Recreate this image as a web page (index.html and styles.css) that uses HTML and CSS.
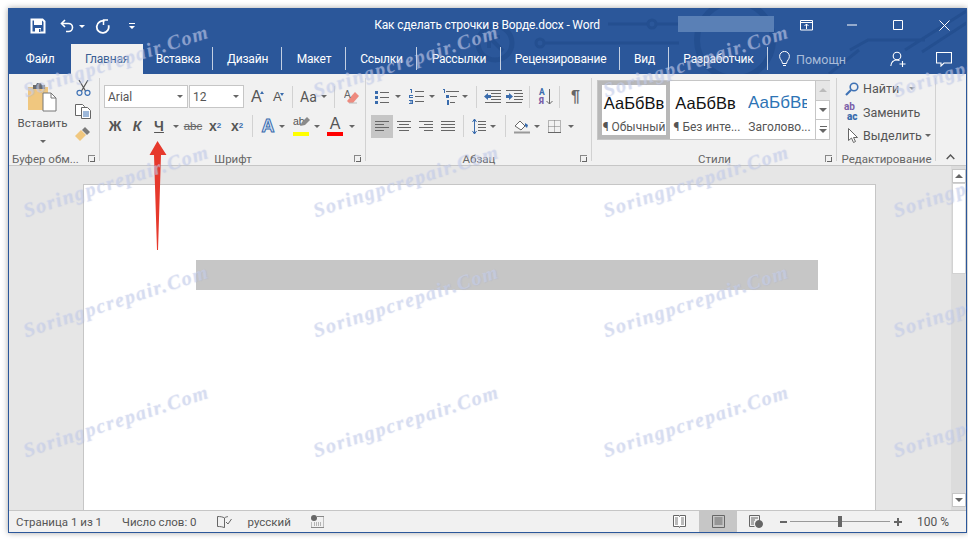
FILE: index.html
```html
<!DOCTYPE html>
<html lang="ru">
<head>
<meta charset="utf-8">
<title>Как сделать строчки в Ворде.docx - Word</title>
<link rel="stylesheet" href="styles.css">
</head>
<body>
<div class="window">
  <header class="head">
    <svg class="circuit" width="957" height="66" viewBox="0 0 957 66" fill="none" stroke="#244f90" stroke-width="3">
      <circle cx="486" cy="35" r="17" stroke-width="5"/>
      <path d="M480 29l14 14M480 29v11M480 29h11" stroke-width="4"/>
      <circle cx="531" cy="35" r="4"/>
      <path d="M535 35H670"/>
      <path d="M599 16H639"/>
      <circle cx="643" cy="16" r="4"/>
      <path d="M647 16H700"/>
      <circle cx="726" cy="32" r="38" stroke-width="6"/>
      <path d="M841 42L859 32H916M896 42L959 2M913 44L959 14M820 66l30-24"/>
    </svg>
    <div class="titlebar">
      <div class="qat">
        <svg class="qsave" width="16" height="16" viewBox="0 0 16 16"><path d="M1.500 1.500h11l2 2v11h-13z" fill="none" stroke="#fff" stroke-width="2"/><path d="M4 2h8v5H4zM5 10h6v5H5z" fill="#fff"/><path d="M9 11h1.500v3H9z" fill="#2b579a"/></svg>
        <svg class="qundo" width="14" height="14" viewBox="0 0 14 14" fill="none" stroke="#fff" stroke-width="1.600"><path d="M5 1L1.500 4.500 5 8"/><path d="M2 4.500h6.500a4 4 0 0 1 0 8H6"/></svg>
        <span class="caret white qdd"></span>
        <svg class="qredo" width="15" height="15" viewBox="0 0 15 15" fill="none" stroke="#fff" stroke-width="1.800"><path d="M9.500 2.200a6 6 0 1 0 4 4"/><path d="M13 1H8.500v5" stroke-width="1.500"/></svg>
        <svg class="qmore" width="8" height="8" viewBox="0 0 8 8"><path d="M1 1h6v1H1z M1 4h6L4 7z" fill="#fff"/></svg>
      </div>
      <div class="doctitle">Как сделать строчки в Ворде.docx - Word</div>
      <div class="controls">
        <span class="blurbox"></span>
        <span class="ctl"><svg width="13" height="11" viewBox="0 0 13 11" fill="none" stroke="#fff"><path d="M.5 .5h12v9.500H.5zM.5 2.500h12"/><path d="M6.500 9V4M4.500 6l2-2 2 2"/></svg></span>
        <span class="ctl"><svg width="10" height="10" viewBox="0 0 10 10"><path d="M0 5h10" stroke="#fff"/></svg></span>
        <span class="ctl"><svg width="10" height="10" viewBox="0 0 10 10"><path d="M.5 .5h9v9h-9z" fill="none" stroke="#fff"/></svg></span>
        <span class="ctl"><svg width="11" height="11" viewBox="0 0 11 11"><path d="M.5 .5l10 10M10.500 .5l-10 10" stroke="#fff"/></svg></span>
      </div>
    </div>
    <nav class="tabs">
      <span class="tab file">Файл</span>
      <span class="tab active">Главная</span>
      <span class="tab sep">Вставка</span>
      <span class="tab sep">Дизайн</span>
      <span class="tab sep">Макет</span>
      <span class="tab sep">Ссылки</span>
      <span class="tab sep">Рассылки</span>
      <span class="tab sep">Рецензирование</span>
      <span class="tab sep">Вид</span>
      <span class="tab sep">Разработчик</span>
      <span class="help">
        <svg width="11" height="16" viewBox="0 0 11 16" fill="none" stroke="#fff"><path d="M3.500 12.500C3 9 .6 8.500 .6 5.300a4.900 4.900 0 0 1 9.800 0c0 3.200-2.400 3.700-2.900 7.200zM4 14.500h3"/></svg>
        <span class="helptext">Помощн</span>
      </span>
      <span class="tabicons">
        <svg width="16" height="16" viewBox="0 0 16 16" fill="none" stroke="#fff" stroke-width="1.100"><circle cx="7" cy="5" r="3.800"/><path d="M.8 15c.4-3.500 2.500-6 6.200-6 1 0 1.800.2 2.500.5M12.500 10v6M9.500 13h6"/></svg>
        <svg width="16" height="15" viewBox="0 0 16 15" fill="none" stroke="#fff" stroke-width="1.100"><path d="M.5 .5h15v10.500H8l-3 3v-3H.5z"/></svg>
      </span>
    </nav>
  </header>

  <section class="ribbon">
    <div class="group g-clip">
      <div class="g-body clipbody">
        <div class="paste">
          <svg width="29" height="30" viewBox="0 0 29 30"><path d="M0 5h20v23H0z" fill="#f0c77f"/><path d="M5 3h3l1-2h4l1 2h3v4H5z" fill="#6a6a6a"/><path d="M15 11h8l5 5v13H15z" fill="#fff" stroke="#777"/><path d="M23 11v5h5" fill="none" stroke="#777"/></svg>
          <span class="pastelabel">Вставить</span>
          <span class="caret"></span>
        </div>
        <div class="clipicons">
          <svg width="15" height="16" viewBox="0 0 15 16" fill="none" stroke="#555" stroke-width="1.200"><path d="M3 0l6.500 11M12 0L5.500 11"/><circle cx="3.500" cy="12.800" r="2.500" stroke="#3f72b5"/><circle cx="11.500" cy="12.800" r="2.500" stroke="#3f72b5"/></svg>
          <svg width="16" height="15" viewBox="0 0 16 15" fill="#fff" stroke="#666"><path d="M.5 .5h7l2 2v9h-9z"/><path d="M6.500 3.500h6l3 3v8h-9z"/><path d="M8 8h6M8 10h6M8 12h6" stroke="#3f72b5"/></svg>
          <svg width="16" height="15" viewBox="0 0 16 15"><path d="M0 9l6-6 5 5-6 6z" fill="#f0c77f"/><path d="M7 3l3-3 5 5-3 3z" fill="#7a7a7a"/></svg>
        </div>
      </div>
      <div class="g-label"><span class="lbl-l">Буфер обм...</span><i class="launch"></i></div>
    </div>

    <div class="group g-font">
      <div class="g-body">
        <div class="row r1">
          <span class="combo c-font">Arial<span class="caret"></span></span>
          <span class="combo c-size">12<span class="caret"></span></span>
          <span class="growA big">A<i class="tri up"></i></span>
          <span class="growA small">A<i class="tri down"></i></span>
          <i class="vsep vs-a"></i>
          <span class="case">Aa<span class="caret"></span></span>
          <i class="vsep vs-b"></i>
          <svg class="erase" width="16" height="15" viewBox="0 0 16 15"><path d="M3 12L11 3l4 4-6 7H5z" fill="#ee8a7e"/><text x="0" y="9" class="eraseA">A</text><path d="M5 14h8" stroke="#bbb"/></svg>
        </div>
        <div class="row r2">
          <span class="fb fbold">Ж</span>
          <span class="fb fital">К</span>
          <span class="fb funder">Ч</span>
          <span class="dd"><span class="caret"></span></span>
          <span class="fb fstrike">abc</span>
          <span class="fb fsub">x<sub>2</sub></span>
          <span class="fb fsub sup">x<sup>2</sup></span>
          <i class="vsep v2"></i>
          <span class="fb feffect">A</span>
          <span class="dd ddn"><span class="caret"></span></span>
          <span class="fb fhl"><span class="hltext">ab</span><svg class="pen" width="10" height="10" viewBox="0 0 10 10"><path d="M0 9l2-4 5-5 3 3-5 5z" fill="#8a8a8a"/></svg><i class="bar yellow"></i></span>
          <span class="dd"><span class="caret"></span></span>
          <span class="fb fcolor">A<i class="bar red"></i></span>
          <span class="dd"><span class="caret"></span></span>
        </div>
      </div>
      <div class="g-label"><span>Шрифт</span><i class="launch"></i></div>
    </div>

    <div class="group g-para">
      <div class="g-body">
        <div class="row r1 pr1">
          <span class="pi w-bul"><svg width="14" height="14" viewBox="0 0 14 14"><path d="M5 2.500h9M5 7.500h9M5 12.500h9" stroke="#666"/><path d="M0 1h3v3H0zM0 6h3v3H0zM0 11h3v3H0z" fill="#3a6cad"/></svg></span>
          <span class="dd d18"><span class="caret"></span></span>
          <span class="pi w-num"><svg width="15" height="15" viewBox="0 0 15 15"><path d="M6 2.500h9M6 7.500h9M6 12.500h9" stroke="#666"/><path d="M1 0h2v4H2V1H1zM0 6h4v1H1v1h3v1H0zM0 11h4v4H0v-1h3v-.5H1v-1h2V12H0z" fill="#3a6cad"/></svg></span>
          <span class="dd d16"><span class="caret"></span></span>
          <span class="pi w-multi"><svg width="17" height="16" viewBox="0 0 17 16"><path d="M4 2.500h13M8 7.500h7M8 13.500h5" stroke="#666"/><path d="M1 0h2v4H2V1H1zM4 6h3v3H4zM5 11h2v5H5z" fill="#3a6cad"/></svg></span>
          <span class="dd d11"><span class="caret"></span></span>
          <i class="vsep vs-c"></i>
          <span class="pi w-ind"><svg width="17" height="13" viewBox="0 0 17 13"><path d="M1 .5h16M7 3.500h10M7 6.500h10M7 9.500h10M1 12.500h16" stroke="#666"/><path d="M0 6.500L4 3v2h3v3H4v2z" fill="#3a6cad"/></svg></span>
          <span class="pi w-ind"><svg width="17" height="13" viewBox="0 0 17 13"><path d="M0 .5h16M8 3.500h9M8 6.500h9M8 9.500h9M0 12.500h16" stroke="#666"/><path d="M7 6.500L3 3v2H0v3h3v2z" fill="#3a6cad"/></svg></span>
          <i class="vsep vs-d"></i>
          <span class="pi w-sort"><span class="sortA"><span>А</span><b>Я</b></span><svg width="7" height="16" viewBox="0 0 7 16"><path d="M3.500 0v15M.5 12l3 3 3-3" fill="none" stroke="#666"/></svg></span>
          <i class="vsep vs-e"></i>
          <span class="pilcrow">¶</span>
        </div>
        <div class="row r2 pr2">
          <span class="al active-al"><svg width="14" height="11" viewBox="0 0 14 11"><path d="M0 .5h14M0 3.500h9M0 6.500h14M0 9.500h9" stroke="#666"/></svg></span>
          <span class="al"><svg width="14" height="11" viewBox="0 0 14 11"><path d="M0 .5h14M2 3.500h10M0 6.500h14M2 9.500h10" stroke="#666"/></svg></span>
          <span class="al"><svg width="14" height="11" viewBox="0 0 14 11"><path d="M0 .5h14M5 3.500h9M0 6.500h14M5 9.500h9" stroke="#666"/></svg></span>
          <span class="al"><svg width="14" height="11" viewBox="0 0 14 11"><path d="M0 .5h14M0 3.500h14M0 6.500h14M0 9.500h14" stroke="#666"/></svg></span>
          <i class="vsep v3"></i>
          <span class="pi w-ls"><svg width="14" height="15" viewBox="0 0 14 15"><path d="M6 2.500h8M6 5.500h8M6 8.500h8M6 11.500h8" stroke="#666"/><path d="M2.500 0v15M.5 3l2-3 2 3M.5 12l2 3 2-3" fill="none" stroke="#3a6cad"/></svg></span>
          <span class="dd d14"><span class="caret"></span></span>
          <i class="vsep v4"></i>
          <span class="pi w-shade"><svg width="16" height="15" viewBox="0 0 16 15"><path d="M1 7l5-5 5 5-4 4z" fill="#fff" stroke="#666"/><path d="M11 4l3 2-1 3-2-2z" fill="#3a6cad"/><path d="M0 13.500h16" stroke="#999" stroke-width="2"/></svg></span>
          <span class="dd d14"><span class="caret"></span></span>
          <span class="pi w-bord"><svg width="13" height="13" viewBox="0 0 13 13"><path d="M.5 .5h12v12H.5zM.5 6.500h12M6.500 .5v12" fill="none" stroke="#777" stroke-dasharray="1 1"/><path d="M0 12.500h13" stroke="#666"/></svg></span>
          <span class="dd d20"><span class="caret"></span></span>
        </div>
      </div>
      <div class="g-label"><span>Абзац</span><i class="launch"></i></div>
    </div>

    <div class="group g-styles">
      <div class="g-body">
        <div class="gallery">
          <div class="style selected"><span class="sample">АаБбВв</span><span class="stylename">¶ Обычный</span></div>
          <div class="style"><span class="sample">АаБбВв</span><span class="stylename">¶ Без инте...</span></div>
          <div class="style third"><span class="sample blue">АаБбВв</span><span class="stylename">Заголово...</span></div>
          <div class="gscroll">
            <span class="gb off"><span class="caret up"></span></span>
            <span class="gb"><span class="caret"></span></span>
            <span class="gb more"><i></i><span class="caret"></span></span>
          </div>
        </div>
      </div>
      <div class="g-label"><span>Стили</span><i class="launch"></i></div>
    </div>

    <div class="group g-edit">
      <div class="g-body editbody">
        <div class="edit"><svg class="find" width="14" height="14" viewBox="0 0 14 14" fill="none"><circle cx="9" cy="5" r="3.800" stroke="#3f72b5" stroke-width="1.600"/><path d="M6 8l-5 5" stroke="#3f72b5" stroke-width="2.200"/></svg><span>Найти</span><span class="caret c-find"></span></div>
        <div class="edit"><span class="abac"><span>ab</span><b>ac</b></span><span>Заменить</span></div>
        <div class="edit"><svg class="cursor" width="11" height="15" viewBox="0 0 11 15"><path d="M.5 .5v12l3-2.500 2 4.500 2-1-2-4h4z" fill="#fff" stroke="#666"/></svg><span>Выделить</span><span class="caret"></span></div>
      </div>
      <div class="g-label"><span>Редактирование</span></div>
    </div>

    <div class="collapse"><svg width="9" height="6" viewBox="0 0 9 6"><path d="M.7 5l3.800-4 3.800 4" fill="none" stroke="#555" stroke-width="1.400"/></svg></div>
  </section>

  <main class="docarea">
    <div class="pagewrap">
      <div class="page"><div class="graybar"></div></div>
    </div>
    <aside class="vscroll">
      <span class="sbtn"><span class="caret up"></span></span>
      <span class="thumb"></span>
      <span class="strack"></span>
      <span class="sbtn"><span class="caret"></span></span>
    </aside>
  </main>

  <footer class="status">
    <span class="st s1">Страница 1 из 1</span>
    <span class="st s2">Число слов: 0</span>
    <svg class="s3" width="15" height="12" viewBox="0 0 15 12" fill="none" stroke="#666"><path d="M7.500 2C6 .8 3 .5 .5 .5v10c3 0 5 .3 7 1.200zM7.500 2C8.500 1 10 .7 11 .6"/><path d="M9 6l2 2 3.500-5"/></svg>
    <span class="st s4">русский</span>
    <svg class="s5" width="13" height="13" viewBox="0 0 13 13"><circle cx="3" cy="3" r="3" fill="#666"/><path d="M6 1.500h7v11H0V7" fill="none" stroke="#888"/><path d="M3 8h8M3 10h8" stroke="#777" stroke-dasharray="1 1"/></svg>
    <span class="status-right">
      <svg class="vw" width="13" height="13" viewBox="0 0 13 13" fill="#fff" stroke="#666"><path d="M.5 .5h5.500l.5 1 .5-1h5.500v11H7l-.5 1-.5-1H.5z"/><path d="M2 3h3M2 5h3M2 7h3M2 9h3M8 3h3M8 5h3M8 7h3M8 9h3" stroke="#777"/></svg>
      <span class="viewactive"><svg width="13" height="13" viewBox="0 0 13 13" fill="none" stroke="#666"><path d="M.5 .5h12v12H.5zM2.500 3h8M2.500 5h8M2.500 7h8M2.500 9h8"/></svg></span>
      <svg class="vw2" width="14" height="13" viewBox="0 0 14 13" fill="none" stroke="#666"><path d="M.5 .5h10v5M.5 .5v11h5M2 3h7M2 5h4M2 7h3M2 9h3"/><circle cx="10" cy="9" r="3.500" fill="#666"/></svg>
      <span class="zminus"></span>
      <span class="slider"><i></i></span>
      <span class="zplus"></span>
      <span class="zoomval">100 %</span>
    </span>
  </footer>
</div>

<svg class="arrow" width="18" height="110" viewBox="0 0 18 110"><path d="M8.500 0L17.500 14H12L9 109H8L5 14H.5z" fill="#e6392c"/></svg>

<div class="marks" aria-hidden="true">
  <span>Soringpcrepair.Com</span><span>Soringpcrepair.Com</span><span>Soringpcrepair.Com</span><span>Soringpcrepair.Com</span>
  <span>Soringpcrepair.Com</span><span>Soringpcrepair.Com</span><span>Soringpcrepair.Com</span><span>Soringpcrepair.Com</span>
  <span>Soringpcrepair.Com</span><span>Soringpcrepair.Com</span><span>Soringpcrepair.Com</span><span>Soringpcrepair.Com</span>
  <span>Soringpcrepair.Com</span><span>Soringpcrepair.Com</span><span>Soringpcrepair.Com</span><span>Soringpcrepair.Com</span>
</div>
</body>
</html>
```
FILE: styles.css
```css
* { box-sizing: border-box; }
html, body { margin: 0; height: 100%; }
body {
  position: relative;
  width: 968px;
  height: 541px;
  overflow: hidden;
  background: #fff;
  padding: 8px 1px 8px 8px;
  font-family: Roboto, "Noto Sans", sans-serif;
  font-size: 12px;
  color: #555;
}
i { display: block; font-style: normal; }
svg { display: block; flex: none; }

.window {
  width: 959px;
  height: 525px;
  display: flex;
  flex-direction: column;
  background: #f1f1f1;
  border: 1px solid #2b579a;
  border-width: 0 1px 1px 1px;
  box-shadow: 0 0 6px rgba(0, 0, 0, .35);
}

/* head */
.head { position: relative; height: 66px; background: #2b579a; color: #fff; flex: none; overflow: hidden; }
.circuit { position: absolute; left: 0; top: 0; }
.titlebar { position: relative; display: grid; grid-template-columns: 1fr auto 1fr; height: 36px; align-items: center; }
.qat { display: flex; align-items: center; padding-left: 21px; }
.qundo { margin-left: 14px; }
.qdd { margin-left: 5px; }
.qredo { margin-left: 10px; }
.qmore { margin-left: 18px; }
.doctitle { font-size: 12px; letter-spacing: -.15px; margin-top: -2px; margin-left: -1px; white-space: nowrap; }
.controls { display: flex; align-items: center; justify-content: flex-end; margin-right: -1px; }
.blurbox { width: 96px; height: 16px; background: #5a80b6; margin-right: 9px; margin-top: -4px; }
.ctl { width: 46px; height: 30px; display: flex; align-items: center; justify-content: center; margin-top: -2px; }

.tabs {
  position: relative;
  display: grid;
  grid-template-columns: 62px 72px 70px 69px 64px 71px 84px 119px 49px 99px 1fr auto;
  height: 30px;
  font-size: 12px;
  letter-spacing: -.2px;
}
.tab { display: flex; align-items: center; justify-content: center; position: relative; padding-bottom: 1px; }
.tab.sep::after { content: ""; position: absolute; right: 0; top: 3px; height: 23px; width: 1px; background: #c3cfe2; }
.tab.active { background: #f1f1f1; color: #3b5f94; }
.help { display: flex; align-items: center; padding-left: 11px; gap: 6px; }
.helptext { color: #a9bcd9; font-size: 12.500px; letter-spacing: 0; }
.tabicons { display: flex; align-items: center; gap: 30px; padding-right: 14px; }

/* ribbon */
.ribbon { position: relative; display: flex; height: 92px; flex: none; border-bottom: 1px solid #c6c6c6; }
.group { display: flex; flex-direction: column; height: 100%; position: relative; }
.g-clip { width: 91px; }
.g-font { width: 266px; }
.g-para { width: 226px; }
.g-styles { width: 245px; }
.g-edit { width: 99px; }
.group::after { content: ""; position: absolute; right: 0; top: 4px; bottom: 4px; width: 1px; background: #d2d2d2; }
.g-body { flex: 1; min-height: 0; }
.g-label { height: 16px; margin-bottom: -1px; padding-top: 1px; display: flex; align-items: center; justify-content: center; font-size: 11.500px; position: relative; color: #666; white-space: nowrap; flex: none; }
.lbl-l { position: absolute; left: 3px; }
.launch { position: absolute; right: 5px; top: 5px; width: 7px; height: 7px; border: solid #888; border-width: 1px 0 0 1px; }
.launch::after { content: ""; position: absolute; right: 0; bottom: 0; width: 4px; height: 4px; border: solid #666; border-width: 0 1px 1px 0; }

.caret { display: inline-block; width: 0; height: 0; border: 3px solid transparent; border-top: 3px solid #666; border-bottom: 0; flex: none; }
.caret.white { border-top-color: #fff; }
.caret.up { border-top: 0; border-bottom: 4px solid #999; border-left-width: 4px; border-right-width: 4px; }

/* clipboard */
.clipbody { display: flex; }
.paste { width: 66px; display: flex; flex-direction: column; align-items: center; padding-top: 8px; padding-left: 1px; }
.pastelabel { margin-top: 3px; font-size: 11.500px; line-height: 16px; color: #555; }
.paste .caret { margin-top: 9px; }
.clipicons { display: flex; flex-direction: column; gap: 8px; padding-top: 6px; align-items: center; width: 16px; }

/* rows */
.row { display: flex; align-items: center; }
.r1 { height: 23px; margin-top: 11px; }
.r2 { height: 24px; margin-top: 6px; }
.g-font .row { padding-left: 4px; }
.combo { display: flex; align-items: center; justify-content: space-between; height: 23px; background: #fff; border: 1px solid #c6c6c6; padding: 0 4px 0 3px; font-size: 12px; color: #555; }
.c-font { width: 84px; margin-right: 1px; }
.c-size { width: 55px; }
.growA { position: relative; font-family: "Liberation Sans", sans-serif; color: #555; }
.growA .tri { position: absolute; left: 10px; top: 3px; width: 0; height: 0; border: 2.500px solid transparent; }
.growA.small .tri { left: 8px; top: 4px; }
.tri.up { border-bottom: 3px solid #3a6cad !important; border-top: 0 !important; }
.tri.down { border-top: 3px solid #3a6cad !important; border-bottom: 0 !important; }
.big { font-size: 16px; margin-left: 6px; width: 16px; padding-left: 1px; }
.small { font-size: 13px; margin-left: 6px; width: 15px; padding-left: 1px; }
.vsep { width: 1px; height: 22px; background: #d2d2d2; flex: none; }
.vs-a { margin: 0 7px 0 5px; }
.vs-b { margin: 0 7px 0 9px; }
.case { display: flex; align-items: center; gap: 4px; font-size: 14px; width: 25px; white-space: nowrap; font-family: Roboto, sans-serif; }
.eraseA { font: 10px "Liberation Sans", sans-serif; fill: #666; }
.erase { margin-left: 2px; }

.fb { width: 22px; height: 24px; display: flex; align-items: center; justify-content: center; position: relative; color: #555; font-family: "Liberation Sans", sans-serif; font-size: 14px; font-weight: bold; flex: none; }
.fital { font-style: italic; }
.funder { text-decoration: underline; }
.fstrike { font-size: 11.500px; text-decoration: line-through; font-weight: normal; color: #666; }
.fsub sub, .fsub sup { font-size: 8px; line-height: 0; color: #3a6cad; }
.dd { width: 12px; display: flex; justify-content: center; flex: none; }
.ddn { margin-left: -3px; }
.d11 { width: 11px; }
.d14 { width: 14px; }
.d16 { width: 16px; }
.d18 { width: 18px; }
.d20 { width: 20px; }
.v2 { margin: 0 4px; }
.feffect { color: #d8e6f7; font-size: 18px; -webkit-text-stroke: 1px #3a6cad; }
.fhl { margin-left: 1px; display: block; }
.hltext { position: absolute; left: 4px; top: 1px; font-size: 10.500px; font-weight: normal; color: #555; }
.pen { position: absolute; left: 11px; top: 3px; }
.bar { position: absolute; left: 4px; right: 2px; bottom: 2px; height: 4px; }
.yellow { background: #ffff00; }
.red { background: #ff0000; }
.fcolor { font-weight: normal; font-size: 16px; padding-bottom: 5px; margin-left: 1px; }
.fcolor .bar { left: 3px; right: 3px; }

/* paragraph */
.pr1 { padding-left: 9px; }
.pi { display: flex; align-items: center; flex: none; }
.w-bul { width: 14px; }
.w-num { width: 15px; margin-left: 2px; }
.w-multi { width: 17px; margin-left: 2px; }
.vs-c { margin: 0 7px 0 6px; }
.w-ind { width: 17px; margin-right: 5px; }
.vs-d { margin: 0 9px 0 1px; }
.w-sort { width: 15px; gap: 1px; }
.sortA { display: flex; flex-direction: column; font-size: 8.500px; line-height: 9px; font-weight: bold; color: #3a6cad; }
.sortA b { color: #7a5ea8; }
.vs-e { margin: 0 11px 0 5px; }
.pilcrow { font-size: 16px; line-height: 16px; font-weight: bold; color: #666; font-family: "Liberation Sans", sans-serif; }
.pr2 { padding-left: 5px; }
.al { width: 22px; height: 23px; display: flex; align-items: center; justify-content: center; flex: none; }
.active-al { background: #c6c6c6; }
.v3 { margin: 0 4px; }
.w-ls { width: 14px; margin-left: 4px; }
.v4 { margin: 0 8px 0 5px; }
.w-shade { width: 16px; }
.w-bord { width: 13px; margin-left: 4px; }

/* styles */
.gallery { display: flex; width: 233px; height: 60px; margin: 6px 0 0 5px; background: #fff; border: 1px solid #c6c6c6; }
.style { width: 74px; display: flex; flex-direction: column; align-items: center; flex: none; overflow: hidden; padding-top: 12px; }
.style.selected { width: 72px; border: 4px solid #b8b8b8; padding-top: 8px; }
.style.third { width: 71px; }
.sample { font-family: "Liberation Sans", sans-serif; font-size: 16.500px; line-height: 20px; color: #111; white-space: nowrap; margin-left: -3px; }
.selected .sample { margin-left: 0; }
.sample.blue { color: #2e74b5; font-size: 17px; align-self: flex-start; margin-left: 4px; width: 59px; overflow: hidden; }
.stylename { margin-top: 7px; font-size: 12px; line-height: 14px; white-space: nowrap; color: #555; }
.gscroll { width: 15px; flex: none; margin-left: auto; display: flex; flex-direction: column; border-left: 1px solid #c6c6c6; }
.gb { flex: 1; display: flex; flex-direction: column; align-items: center; justify-content: center; gap: 2px; border-bottom: 1px solid #c6c6c6; }
.gb:last-child { border-bottom: 0; }
.gb.off { background: #e6e6e6; }
.gb.off .caret.up { border-bottom-color: #bbb; }
.gb .caret { border-left-width: 4px; border-right-width: 4px; border-top-width: 4px; }
.gb.more i { width: 7px; height: 1px; background: #666; }

/* editing */
.editbody { display: flex; flex-direction: column; padding: 3px 0 0 7px; }
.edit { display: flex; align-items: center; height: 23.500px; gap: 4px; font-size: 12.500px; color: #555; white-space: nowrap; }
.find { margin-left: 1px; }
.cursor { margin-left: 4px; }
.edit .caret { margin-left: -1px; }
.edit .c-find { margin-left: 6px; border-top-color: #999; }
.abac { display: flex; flex-direction: column; width: 15px; font-size: 10px; line-height: 10px; color: #7a5ea8; font-weight: bold; }
.abac b { color: #3a6cad; padding-left: 3px; }
.collapse { flex: 1; display: flex; justify-content: center; align-items: flex-end; padding: 0 1px 5px 0; }

/* doc */
.docarea { flex: 1; display: flex; min-height: 0; background: #e6e6e6; }
.pagewrap { flex: 1; padding: 18px 75px 0 74px; overflow: hidden; }
.page { background: #fff; height: 100%; border: 1px solid #c6c6c6; border-bottom: 0; padding-top: 75px; padding-left: 112px; }
.graybar { width: 622px; height: 30px; background: #c6c6c6; }
.vscroll { width: 15px; display: flex; flex-direction: column; background: #dcdcdc; align-items: stretch; padding: 3px 0 3px 1px; flex: none; }
.sbtn { height: 14px; background: #fff; border: 1px solid #c6c6c6; display: flex; align-items: center; justify-content: center; flex: none; }
.sbtn .caret { border-left-width: 4px; border-right-width: 4px; border-top-width: 4px; border-top-color: #666; }
.sbtn .caret.up { border-bottom-color: #666; }
.thumb { height: 91px; background: #fff; border: 1px solid #d2d2d2; flex: none; }
.strack { flex: 1; }

/* status */
.status { height: 22px; flex: none; display: flex; align-items: center; border-top: 1px solid #c6c6c6; background: #f1f1f1; font-size: 11.500px; color: #555; }
.st { white-space: nowrap; }
.s1 { margin-left: 7px; }
.s2 { margin-left: 20px; }
.s3 { margin-left: 20px; }
.s4 { margin-left: 16px; }
.s5 { margin-left: 20px; }
.status-right { margin-left: auto; display: flex; align-items: center; height: 100%; padding-right: 19px; }
.viewactive { width: 38px; height: 100%; background: #c6c6c6; display: flex; align-items: center; justify-content: center; margin: 0 12px 0 13px; }
.zminus { width: 7px; height: 2px; background: #666; margin-left: 17px; }
.slider { position: relative; width: 100px; height: 1px; background: #999; margin: 0 4px 0 3px; }
.slider i { position: absolute; left: 48px; top: -5px; width: 4px; height: 11px; background: #666; }
.zplus { position: relative; width: 8px; height: 2px; background: #666; }
.zplus::after { content: ""; position: absolute; left: 3px; top: -3px; width: 2px; height: 8px; background: #666; }
.zoomval { margin-left: 15px; width: 30px; text-align: right; white-space: nowrap; font-size: 12px; }

/* overlays */
.arrow { position: absolute; left: 149px; top: 141px; }
.marks {
  position: absolute; inset: 0;
  overflow: hidden;
  pointer-events: none;
  display: grid;
  grid-template-columns: repeat(4, 290px);
  grid-auto-rows: 120px;
  padding: 18px 0 0 20px;
}
.marks span {
  display: block;
  white-space: nowrap;
  width: 190px;
  font: italic bold 20px "Liberation Serif", serif;
  letter-spacing: 1.500px;
  color: rgba(205, 212, 238, .5);
  text-shadow: .5px .5px 1px rgba(150, 165, 215, .3);
  transform: rotate(-18deg);
  transform-origin: center;
  height: 30px;
  margin-top: 32px;
}
```
